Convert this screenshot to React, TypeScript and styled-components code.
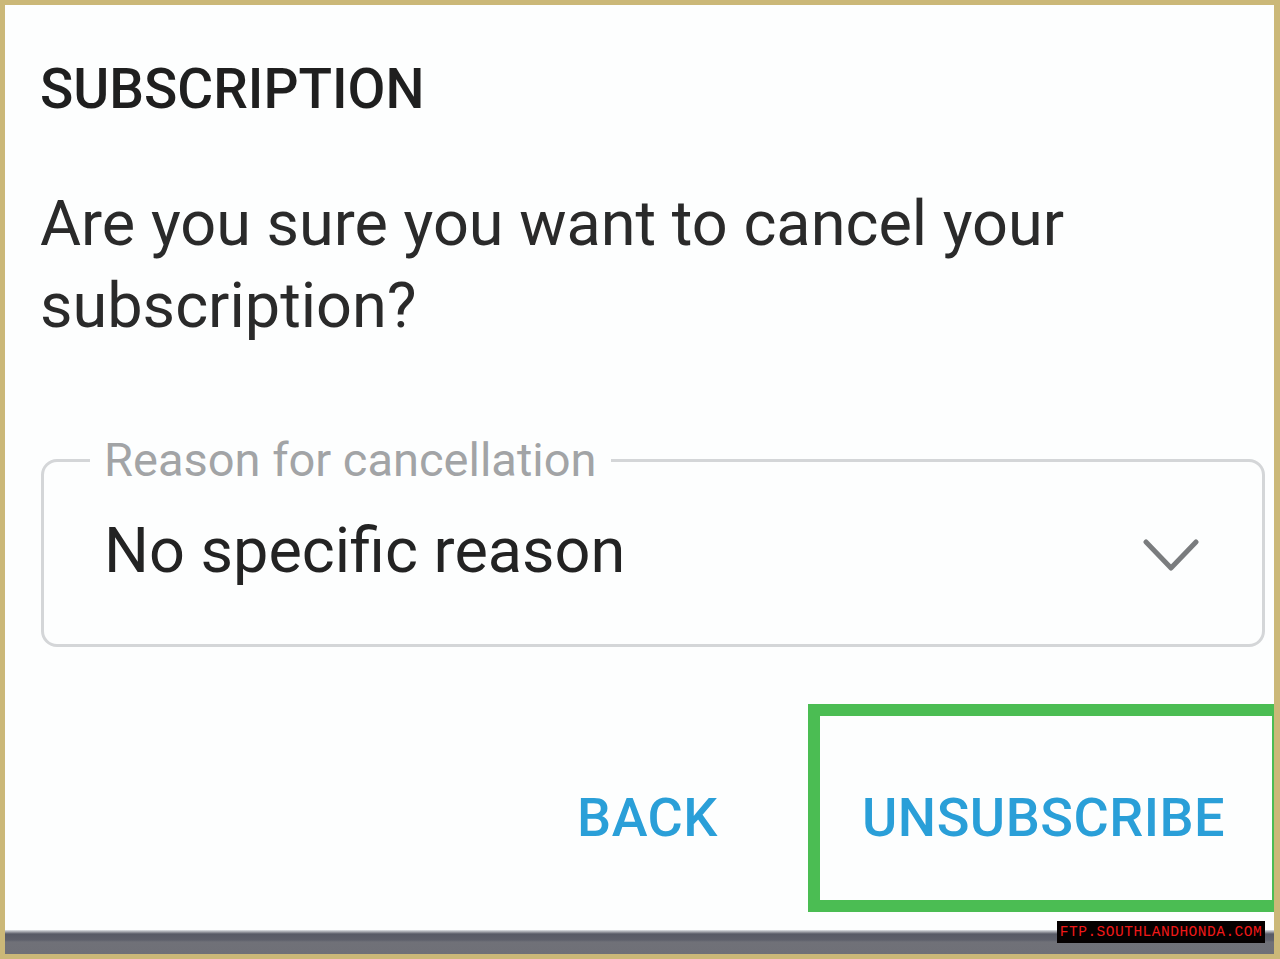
import React from "react";
import styled, { createGlobalStyle } from "styled-components";

const GlobalStyle = createGlobalStyle`
  html, body {
    margin: 0;
    padding: 0;
    background: #cbb878;
  }
  * {
    box-sizing: border-box;
  }
`;

const Frame = styled.div`
  position: relative;
  width: 1280px;
  height: 959px;
  padding: 5px 6px 5px 5px;
  background: #cbb878;
  display: flex;
  flex-direction: column;
  overflow: hidden;
`;

const Screen = styled.div`
  flex: 1;
  display: flex;
  flex-direction: column;
  background: #fdfefe;
  font-family: Roboto, "Liberation Sans", sans-serif;
  overflow: hidden;
`;

const Dialog = styled.div`
  flex: 1;
  display: flex;
  flex-direction: column;
  padding: 0 0 0 35px;
`;

const Title = styled.h2`
  margin: 49px 0 0;
  font-size: 55px;
  line-height: 70px;
  font-weight: 500;
  color: #1f1f1f;
`;

const Message = styled.p`
  margin: 59px 0 0;
  font-size: 63px;
  line-height: 82px;
  font-weight: 400;
  color: #2a2a2a;
  max-width: 1080px;
`;

const Field = styled.fieldset`
  margin: 90px 9px 0 1px;
  padding: 0 63px 0 60px;
  height: 210px;
  border: 3px solid #d4d6d8;
  border-radius: 16px;
`;

const Legend = styled.legend`
  margin-left: -14px;
  padding: 0 14px;
  font-size: 47px;
  line-height: 46px;
  color: #a2a4a6;
  font-weight: 400;
`;

const FieldRow = styled.div`
  height: 161px;
  padding-bottom: 26px;
  display: flex;
  align-items: center;
  justify-content: space-between;
`;

const Value = styled.span`
  font-size: 63px;
  color: #232323;
`;

const Chevron = styled.svg`
  width: 56px;
  height: 36px;
  margin-top: 8px;
`;

const Actions = styled.div`
  display: flex;
  justify-content: flex-end;
  align-items: center;
  margin-top: 57px;
`;

const ActionButton = styled.button<{ $highlighted?: boolean }>`
  background: transparent;
  font-family: Roboto, "Liberation Sans", sans-serif;
  font-size: 54px;
  font-weight: 500;
  letter-spacing: 0.5px;
  color: #2a9fd8;
  cursor: pointer;
  height: 208px;
  text-align: left;
  flex-shrink: 0;
  border: ${({ $highlighted }) =>
    $highlighted ? "12px solid #4bbd53" : "none"};
  padding: ${({ $highlighted }) =>
    $highlighted ? "18px 30px 0 42px" : "18px 0 0"};
  margin-right: ${({ $highlighted }) => ($highlighted ? "-10px" : "90px")};
  width: ${({ $highlighted }) => ($highlighted ? "476px" : "auto")};
`;

const NavBar = styled.div`
  height: 24px;
  background: linear-gradient(
    to bottom,
    #dfe2e6 0px,
    #9a9ca4 2px,
    #575a66 4px,
    #5e606b 10px,
    #707178 12px,
    #6f7077 24px
  );
`;

const Watermark = styled.div`
  position: absolute;
  left: 1057px;
  top: 921px;
  width: 208px;
  height: 22px;
  background: #050000;
  color: #f01818;
  font-family: "Liberation Mono", "DejaVu Sans Mono", monospace;
  font-size: 14.5px;
  line-height: 22px;
  text-align: center;
  letter-spacing: 0.5px;
`;

export default function App() {
  return (
    <>
      <GlobalStyle />
      <Frame>
        <Screen>
          <Dialog>
            <Title>SUBSCRIPTION</Title>
            <Message>Are you sure you want to cancel your subscription?</Message>
            <Field>
              <Legend>Reason for cancellation</Legend>
              <FieldRow>
                <Value>No specific reason</Value>
                <Chevron viewBox="0 0 56 36">
                  <path
                    d="M3 5 L28 31 L53 5"
                    fill="none"
                    stroke="#7a7c7e"
                    strokeWidth="5"
                    strokeLinecap="round"
                    strokeLinejoin="round"
                  />
                </Chevron>
              </FieldRow>
            </Field>
            <Actions>
              <ActionButton>BACK</ActionButton>
              <ActionButton $highlighted>UNSUBSCRIBE</ActionButton>
            </Actions>
          </Dialog>
          <NavBar />
        </Screen>
        <Watermark>FTP.SOUTHLANDHONDA.COM</Watermark>
      </Frame>
    </>
  );
}
